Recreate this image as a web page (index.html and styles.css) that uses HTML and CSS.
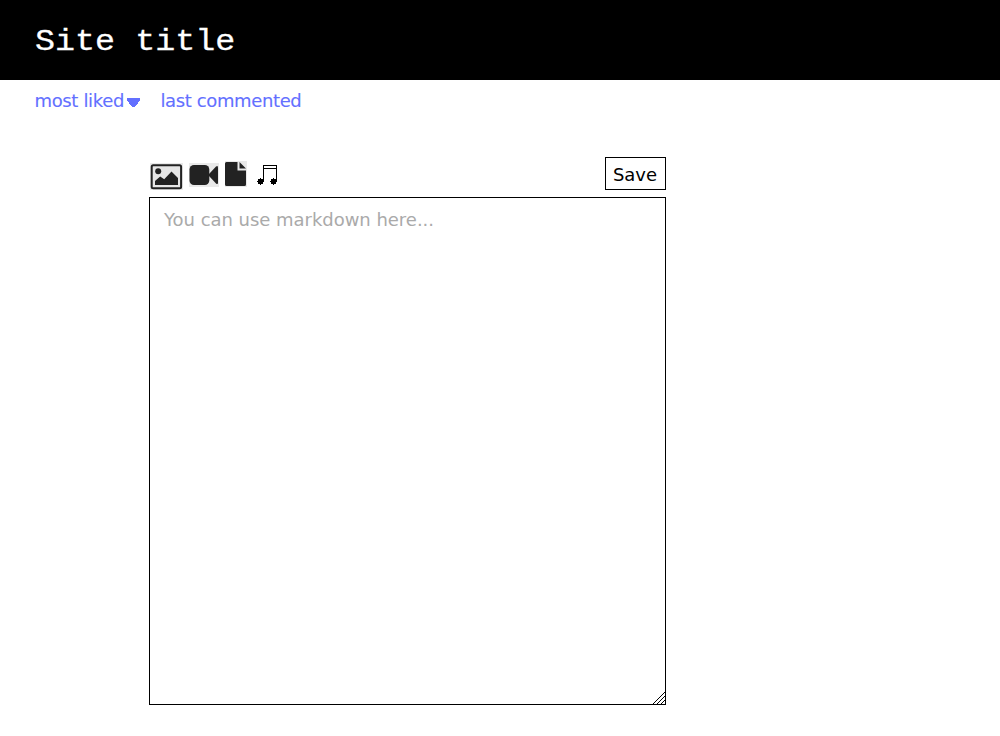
FILE: index.html
```html
<!DOCTYPE html>
<html lang="en">
<head>
<meta charset="utf-8">
<title>Site title</title>
<link rel="stylesheet" href="styles.css">
</head>
<body>
<header class="header"><h1 class="title">Site title</h1></header>
<nav class="nav">
  <a class="link"><span class="liked">most liked</span><svg class="caret" width="13" height="9" viewBox="0 0 13 9" shape-rendering="crispEdges"><path d="M0 0h13v3h-1v1h-1v2h-1v1h-1v1h-1v1H5V8H4V7H3V6H2V4H1V3H0z"/></svg></a>
  <a class="link commented">last commented</a>
</nav>
<main class="editor">
  <div class="toolbar">
    <div class="icons">
      <svg width="136" height="32" viewBox="149 158 136 32">
        <path fill="#e9e9e9" d="M150 163h33v27h-33zM189 163h30v24h-30zM225 161h22v26h-22z"/>
        <rect x="151.700" y="165.200" width="29.400" height="23" rx="1.500" fill="#e6e6e6" stroke="#222" stroke-width="2"/>
        <circle cx="158.200" cy="171.300" r="3" fill="#222"/>
        <path fill="#222" d="M155 185v-4l5.200-4.500 4 2.800 7.300-7.800 6.500 6.500v7z"/>
        <rect x="189.500" y="165" width="19.800" height="20" rx="4.500" fill="#222"/>
        <path fill="#222" d="M209 174l7-7.500q2-1.500 2 1v15q0 2.500-2 1l-7-7.500z"/>
        <path fill="#222" d="M226.500 162h11v8.500h8.500V184.500q0 1.500-1.500 1.500h-18q-1.500 0-1.500-1.500v-21q0-1.500 1.500-1.500zM239.500 162v6.500h6.500z"/>
        <g shape-rendering="crispEdges"><path d="M263 165h14v1h-14zM263 168h14v1h-14zM263 165h1v16h-1zM276 165h1v16h-1z"/>
        <path d="M260 178h1v1h2v2h1v1h-1v2h-2v1h-1v-1h-2v-2h-1v-1h1v-2h2zM273 178h1v1h2v2h1v1h-1v2h-2v1h-1v-1h-2v-2h-1v-1h1v-2h2z"/></g>
      </svg>
    </div>
    <button class="save">Save</button>
  </div>
  <div class="area">
    <span class="hint">You can use markdown here...</span>
    <svg class="grip" width="13" height="12" viewBox="0 0 13 12" shape-rendering="crispEdges"><path d="M.5 12.500l12-12M4.500 12.500l8-8M8.500 12.500l4-4" stroke="#000" fill="none"/></svg>
  </div>
</main>
</body>
</html>
```
FILE: styles.css
```css
body { margin: 0; background: #fff; font-family: "DejaVu Sans", sans-serif; font-size: 18px; }
.header { height: 80px; box-sizing: border-box; background: #000; padding: 21px 35px 0; }
.title { margin: 0; color: #fff; font: 400 33.4px/40px "Liberation Mono", monospace; -webkit-text-stroke: 0.3px #fff; white-space: pre; transform: scaleY(0.87); transform-origin: 0 30px; }
.nav { display: flex; gap: 20px; height: 42px; box-sizing: border-box; padding: 10px 35px 0; color: #6370ff; line-height: 21px; -webkit-text-stroke: 0.1px #6370ff; }
.link { display: flex; white-space: nowrap; }
.liked { width: 92px; letter-spacing: -0.35px; margin-left: -0.5px; padding-right: 0.5px; }
.commented { letter-spacing: -0.38px; padding-left: 0.5px; }
.caret { margin-top: 8px; fill: #6370ff; stroke: none; }
.editor { width: 517px; margin: 35px 0 0 149px; }
.toolbar { display: flex; justify-content: space-between; height: 40px; }
.icons { padding-top: 1px; }
.icons svg { display: block; }
.save { width: 61px; height: 33px; box-sizing: border-box; border: 1px solid #000; background: #fff; color: #000; padding: 2px 1px 0 0; font: 18px/21px "DejaVu Sans", sans-serif; }
.area { display: flex; justify-content: space-between; height: 508px; box-sizing: border-box; border: 1px solid #000; padding-left: 14px; }
.hint { padding-top: 11px; line-height: 21px; color: #aaa; letter-spacing: -0.03px; }
.grip { align-self: flex-end; }
```
